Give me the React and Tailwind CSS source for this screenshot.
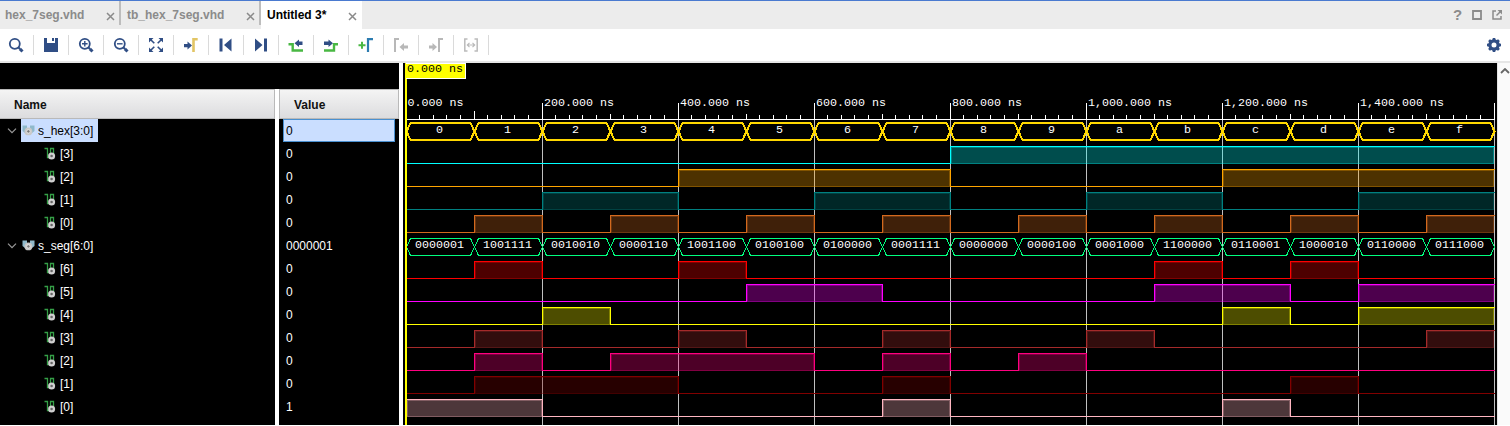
import React from 'react';

const bits = [
  { y: 146, color: '#00ffff', spans: [[8, 16]] },
  { y: 169, color: '#ffa500', spans: [[4, 8], [12, 16]] },
  { y: 192, color: '#008080', spans: [[2, 4], [6, 8], [10, 12], [14, 16]] },
  { y: 215, color: '#d2691e', spans: [[1, 2], [3, 4], [5, 6], [7, 8], [9, 10], [11, 12], [13, 14], [15, 16]] },
  { y: 261, color: '#ff0000', spans: [[1, 2], [4, 5], [11, 12], [13, 14]] },
  { y: 284, color: '#ff00ff', spans: [[5, 7], [11, 13], [14, 16]] },
  { y: 307, color: '#ffff00', spans: [[2, 3], [12, 13], [14, 16]] },
  { y: 330, color: '#a52a2a', spans: [[1, 2], [4, 5], [7, 8], [10, 11], [15, 16]] },
  { y: 353, color: '#ff0080', spans: [[1, 2], [3, 6], [7, 8], [9, 10]] },
  { y: 376, color: '#800000', spans: [[1, 4], [7, 8], [13, 14]] },
  { y: 399, color: '#ffb6c1', spans: [[0, 2], [7, 8], [12, 13]] },
];
const hexValues = '0123456789abcdef'.split('');
const segValues = ['0000001', '1001111', '0010010', '0000110', '1001100', '0100100', '0100000', '0001111', '0000000', '0000100', '0001000', '1100000', '0110001', '1000010', '0110000', '0111000'];
const majors = ['0.000 ns', '200.000 ns', '400.000 ns', '600.000 ns', '800.000 ns', '1,000.000 ns', '1,200.000 ns', '1,400.000 ns'];
const rows = [
  ['s_hex[3:0]', '0', true], ['[3]', '0'], ['[2]', '0'], ['[1]', '0'], ['[0]', '0'],
  ['s_seg[6:0]', '0000001', true], ['[6]', '0'], ['[5]', '0'], ['[4]', '0'], ['[3]', '0'], ['[2]', '0'], ['[1]', '0'], ['[0]', '1'],
];

// The wave canvas starts at x=403, y=63 of the window.
const X0 = 3;
const STEP = 68;
const at = (k) => X0 + k * STEP;

function Bus({ top, bottom, color, width, values, textY, spread }) {
  const mid = (top + bottom) / 2;
  return (
    <g>
      {values.map((v, k) => {
        const a = at(k) + 0.5;
        const b = at(k + 1) + 0.5;
        return (
          <g key={k}>
            <path
              d={`M${a} ${mid} L${a + spread} ${top} H${b - spread} L${b} ${mid} L${b - spread} ${bottom} H${a + spread} Z`}
              fill="none" stroke={color} strokeWidth={width} shapeRendering="crispEdges"
            />
            <text x={a + 33} y={textY} textAnchor="middle" fill="#fff">{v}</text>
          </g>
        );
      })}
    </g>
  );
}

function Bit({ y, color, spans }) {
  let d = `M${X0 + 1} ${spans[0][0] === 0 ? y + 0.5 : y + 17.5}`;
  spans.forEach(([s, e]) => {
    const a = at(s) + 0.5;
    const b = at(e) + 0.5;
    if (s > 0) d += ` H${a} V${y + 0.5}`;
    d += ` H${b}`;
    if (e < 16) d += ` V${y + 17.5}`;
  });
  d += ` H${at(16) + 1}`;
  return (
    <g shapeRendering="crispEdges">
      {spans.map(([s, e]) => (
        <g key={s}>
          <rect x={at(s) + 1} y={y + 1} width={(e - s) * STEP - 1} height="17" fill={color} fillOpacity="0.3" />
          <rect x={at(s) + 1.5} y={y + 1.5} width={(e - s) * STEP - 2} height="16" fill="none" stroke={color} strokeOpacity="0.3" />
        </g>
      ))}
      <path d={d} fill="none" stroke={color} />
    </g>
  );
}

function Waves() {
  const ticks = [];
  for (let i = 0; i <= 80; i++) if (i % 10) ticks.push(i);
  return (
    <svg className="block shrink-0 bg-black font-['Liberation_Mono',monospace] text-[11.67px]" width="1094" height="362" viewBox="0 0 1094 362">
      <g transform="translate(0 -63)">
        <g shapeRendering="crispEdges">
          {majors.map((m, k) => (
            <g key={m}>
              {k > 0 && <rect x={at(2 * k)} y="120" width="1" height="306" fill="#c0c0c0" />}
              {k > 0 && <rect x={at(2 * k)} y="103" width="1" height="16" fill="#fff" />}
            </g>
          ))}
          <rect x={at(16)} y="120" width="1" height="306" fill="#c0c0c0" />
          <rect x={at(16)} y="103" width="1" height="16" fill="#fff" />
          {ticks.map((i) => {
            const y = i === 5 ? 111 : i % 5 === 0 ? 114 : 115;
            return <rect key={i} x={Math.floor(X0 + i * 13.6)} y={y} width="1" height={119 - y} fill="#fff" />;
          })}
          <rect x="4" y="119" width="1088" height="1" fill="#fff" />
        </g>
        {majors.map((m, k) => <text key={m} x={at(2 * k) + (k ? 2 : 1.5)} y="106" fill="#fff">{m}</text>)}
        {bits.map((b) => <Bit key={b.y} {...b} />)}
        <Bus top={123} bottom={140} color="#ffd700" width={2} values={hexValues} textY={133} spread={4} />
        <Bus top={238.5} bottom={255.5} color="#00ff80" width={1} values={segValues} textY={248} spread={4} />
        <g shapeRendering="crispEdges">
          <rect x="2" y="63" width="2" height="363" fill="#ffff00" />
          <rect x="3" y="63" width="60" height="16" fill="#fff" />
          <rect x="2" y="64" width="60" height="14" fill="#ffff00" />
        </g>
        <text x="4" y="72" fill="#000">0.000 ns</text>
      </g>
    </svg>
  );
}

function BusIcon() {
  return (
    <svg width="13" height="12" viewBox="0 0 13 12" className="shrink-0">
      <path d="M0.5 0.5H5V3H8V0.5H12.5V6L10 8H3L0.5 6Z" fill="#8fb9cb" />
      <circle cx="6.4" cy="6.4" r="3.9" fill="#c9c9c9" />
      <circle cx="6.4" cy="6.4" r="1.7" fill="#777" stroke="#efefef" strokeWidth="0.8" />
    </svg>
  );
}

function BitIcon() {
  return (
    <svg width="12" height="13" viewBox="0 0 12 13" className="shrink-0">
      <path d="M0.5 1.5H3.5V10.5H7M6.5 8V1.5H9.5V7" fill="none" stroke="#35a047" strokeWidth="1.3" />
      <circle cx="7.6" cy="9" r="3.5" fill="#d0d0d0" />
      <circle cx="7.6" cy="9" r="1.3" fill="#666" />
    </svg>
  );
}

function Row({ label, bus, selected }) {
  if (bus) {
    return (
      <div className="flex h-[23px] items-center pl-[7px]">
        <svg width="10" height="6" viewBox="0 0 10 6" className="mr-1 shrink-0"><path d="M1 .7L5 4.7L9 .7" fill="none" stroke="#999" strokeWidth="1.2" /></svg>
        <div className={selected ? 'flex h-[23px] w-[77px] items-center gap-[3px] bg-[#cadeff] pl-px text-black' : 'flex h-[23px] items-center gap-[3px] pl-px text-white'}>
          <BusIcon />
          <span>{label}</span>
        </div>
      </div>
    );
  }
  return (
    <div className="flex h-[23px] items-center gap-1 pl-11 text-white">
      <BitIcon />
      <span>{label}</span>
    </div>
  );
}

const navy = '#304e85';
const Glyph = ({ children }) => <svg width="17" height="17" viewBox="-0.5 -0.5 17 17" className="shrink-0">{children}</svg>;
const lens = <><circle cx="7.3" cy="7.3" r="5" fill="none" stroke={navy} strokeWidth="1.8" /><path d="M11 11L12.5 12.5" stroke={navy} strokeWidth="2" /><path d="M12.4 12.4L15 15" stroke={navy} strokeWidth="3" /></>;
const icons = [
  <Glyph>{lens}</Glyph>,
  <Glyph><path d="M1.5 1.5H4.5V6.5H12.5V1.5H15.5V15.5H1.5Z M9.5 1.5H11.5V4.5H9.5Z" fill={navy} /></Glyph>,
  <Glyph>{lens}<path d="M4.5 7.3H10.1M7.3 4.5V10.1" stroke={navy} strokeWidth="1.4" /></Glyph>,
  <Glyph>{lens}<path d="M4.5 7.3H10.1" stroke={navy} strokeWidth="1.4" /></Glyph>,
  <Glyph>
    <path d="M1.5 1.5H6L1.5 6Z M15.5 1.5H11L15.5 6Z M1.5 15.5H6L1.5 11Z M15.5 15.5H11L15.5 11Z" fill={navy} />
    <path d="M3 3L6.8 6.8M14 3L10.2 6.8M3 14L6.8 10.2M14 14L10.2 10.2" stroke={navy} strokeWidth="1.6" />
  </Glyph>,
  <Glyph><path d="M1.5 7.5H5V5L9.5 9L5 13V10.7H1.5Z" fill={navy} /><path d="M11 15.5V2.8H15.2" fill="none" stroke="#e2c565" strokeWidth="2.6" /></Glyph>,
  <Glyph><path d="M2 2H5V15H2Z M14 2V15L6.5 8.5Z" fill={navy} /></Glyph>,
  <Glyph><path d="M11.5 2H14.5V15H11.5Z M2.5 2V15L10 8.5Z" fill={navy} /></Glyph>,
  <Glyph><path d="M1 7.7H5.2V14H15.5" fill="none" stroke="#49b843" strokeWidth="2.4" /><path d="M15 5V8.5H11.5V10.5L7 6.7L11.5 3V5Z" fill={navy} /></Glyph>,
  <Glyph><path d="M1.5 14H11.5V7.7H15.5" fill="none" stroke="#49b843" strokeWidth="2.4" /><path d="M1.5 5H6V3L10.5 6.7L6 10.5V8.5H1.5Z" fill={navy} /></Glyph>,
  <Glyph><path d="M1 8.7H8M4.5 5.2V12.2" stroke="#49b843" strokeWidth="2" /><path d="M10.5 15.5V2.7H15.5" fill="none" stroke="#2c7cb0" strokeWidth="2.2" /></Glyph>,
  <Glyph><path d="M2.5 15.5V2.5H6.5" fill="none" stroke="#b8b8b8" strokeWidth="2" /><path d="M15.5 9H11.5V6.5L7 10.5L11.5 14.5V12H15.5Z" fill="#b8b8b8" /></Glyph>,
  <Glyph><path d="M1.5 9H5V6.5L9.5 10.5L5 14.5V12H1.5Z" fill="#b8b8b8" /><path d="M11.5 15.5V2.5H15.5" fill="none" stroke="#b8b8b8" strokeWidth="2" /></Glyph>,
  <Glyph><path d="M5 2.5H2.3V14.5H5M12 2.5H14.7V14.5H12" fill="none" stroke="#bbb" strokeWidth="1.5" /><path d="M4.5 8.5H12.5M7 6.3L4.8 8.5L7 10.7M10 6.3L12.2 8.5L10 10.7" fill="none" stroke="#bbb" strokeWidth="1.2" /></Glyph>,
];

const Cross = () => <svg width="9" height="9" viewBox="0 0 9 9" className="mt-[3px] shrink-0"><path d="M1 1L8 8M8 1L1 8" stroke="#8a8a8a" strokeWidth="1.5" /></svg>;

export default function App() {
  return (
    <div className="flex h-[426px] w-[1510px] flex-col overflow-hidden bg-white font-['Liberation_Sans',Arial,sans-serif] text-[12px] leading-4">
      <div className="flex h-[29px] shrink-0 border-t border-[#4a7ad0] bg-[#ececec] font-bold text-[#8b8b8b]">
        <div className="flex h-[28px] w-[119px] items-center justify-between pr-1 pl-[5px]"><span>hex_7seg.vhd</span><Cross /></div>
        <div className="h-6 w-[2px] bg-[#bdbdbd]" />
        <div className="flex h-[28px] w-[138px] items-center justify-between pr-1 pl-[6px]"><span>tb_hex_7seg.vhd</span><Cross /></div>
        <div className="h-6 w-[2px] bg-[#bdbdbd]" />
        <div className="flex h-[28px] w-[101px] items-center justify-between bg-white pr-[5px] pl-[6px] text-black"><span>Untitled 3*</span><Cross /></div>
        <div className="ml-auto flex items-center gap-[10px] pr-2">
          <span className="w-[9px] text-[15px] leading-4">?</span>
          <svg width="10" height="10" viewBox="0 0 10 10"><path d="M1 1H9V9H1Z" fill="none" stroke="#8b8b8b" strokeWidth="1.8" /></svg>
          <svg width="10" height="10" viewBox="0 0 10 10"><path d="M4 1H1V9H9V6M4.5 5.5L8.5 1.5" fill="none" stroke="#8b8b8b" strokeWidth="1.5" /><path d="M5.5 0H10V4.5Z" fill="#8b8b8b" /></svg>
        </div>
      </div>
      <div className="flex h-[32px] shrink-0 items-center bg-white">
        {icons.map((icon, i) => (
          <div key={i} className={i === 0 ? 'flex h-5 w-[34px] items-start justify-end border-r border-[#dadada] pt-px pr-[9px]' : 'flex h-5 w-[35px] items-start border-r border-[#dadada] pt-px pl-2'}>{icon}</div>
        ))}
        <svg className="mr-[8px] ml-auto" width="16" height="16" viewBox="0 0 16 16">
          <circle cx="8" cy="8" r="4.1" fill="none" stroke={navy} strokeWidth="3.2" />
          {[0, 45, 90, 135, 180, 225, 270, 315].map((a) => <path key={a} d="M6.2 3.5L6.8 1H9.2L9.8 3.5Z" fill={navy} transform={`rotate(${a} 8 8)`} />)}
        </svg>
      </div>
      <div className="h-[2px] shrink-0 bg-[#e6e6e6]" />
      <div className="flex h-[362px] shrink-0">
        <div className="flex h-[362px] w-[399px] flex-col bg-black">
          <div className="h-[26px] shrink-0" />
          <div className="flex h-[336px] bg-white">
            <div className="w-[275px] bg-black">
              <div className="flex h-[30px] items-center border border-l-0 border-[#b9b9b9] bg-linear-to-b from-[#f4f4f4] to-[#dcdcde] pl-[14px] font-bold text-[#111]"><span className="relative top-px">Name</span></div>
              {rows.map(([label, , bus], i) => <Row key={i} label={label} bus={bus} selected={i === 0} />)}
            </div>
            <div className="ml-1 w-[120px] bg-black">
              <div className="flex h-[30px] items-center border border-[#b9b9b9] bg-linear-to-b from-[#f4f4f4] to-[#dcdcde] pl-[14px] font-bold text-[#111]"><span className="relative top-px">Value</span></div>
              {rows.map(([, value], i) => (
                <div key={i} className={i === 0 ? 'ml-1 flex h-[23px] w-[112px] items-center border border-[#4a90d0] bg-[#cadeff] pl-[2px] text-black' : 'flex h-[23px] items-center pl-[7px] text-white'}><span>{value}</span></div>
              ))}
            </div>
          </div>
        </div>
        <div className="w-1 shrink-0 bg-white" />
        <Waves />
        <div className="flex w-[13px] justify-end border-l border-[#e4e4e4] bg-[#fafafa] pt-[5px]">
          <svg width="10" height="6" viewBox="0 0 10 6"><path d="M1 5L5 1L9 5" fill="none" stroke="#666" strokeWidth="1.8" /></svg>
        </div>
      </div>
    </div>
  );
}
